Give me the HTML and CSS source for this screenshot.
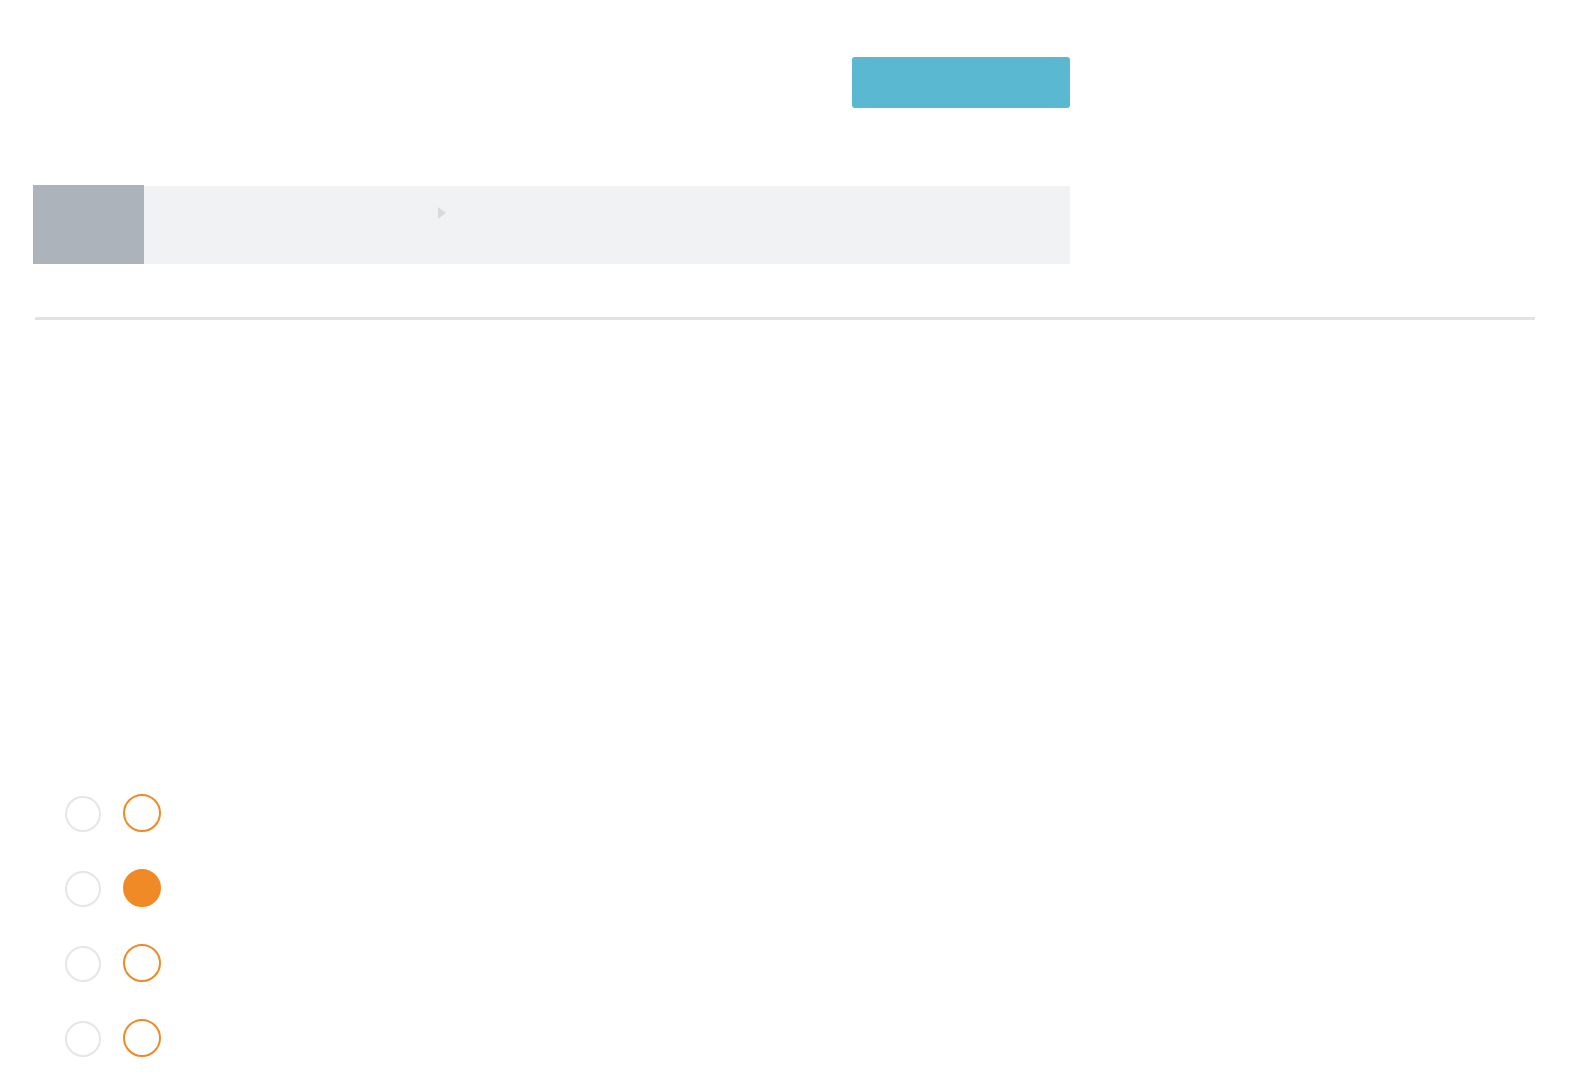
FILE: index.html
```html
<html lang="en">
<head>
    <meta charset="UTF-8">
    <meta name="viewport" content="width=device-width, initial-scale=1.0">
    <title>Options</title>
    <link rel="stylesheet" href="styles.css">
</head>
<body>
    <div class="main-column">
        <div class="toolbar">
            <button class="action-button" type="button"></button>
        </div>
        <div class="path-bar">
            <div class="path-thumb"></div>
            <div class="path-strip">
                <span class="path-arrow"></span>
            </div>
        </div>
    </div>
    <hr class="divider">
    <div class="choice-list">
        <div class="choice-row"><span class="dot"></span><span class="dot orange"></span></div>
        <div class="choice-row"><span class="dot"></span><span class="dot orange filled"></span></div>
        <div class="choice-row"><span class="dot"></span><span class="dot orange"></span></div>
        <div class="choice-row"><span class="dot"></span><span class="dot orange"></span></div>
    </div>
</body>
</html>
```

FILE: styles.css
```css
body {
    margin: 0;
    font-family: "Liberation Sans", Arial, sans-serif;
    background: #ffffff;
}
.main-column {
    width: 1037px;
    margin-left: 33px;
    padding-top: 57px;
}
.toolbar {
    display: flex;
    justify-content: flex-end;
}
.action-button {
    width: 218px;
    height: 51px;
    border: none;
    border-radius: 3px;
    background: #5ab9d1;
    padding: 0;
}
.path-bar {
    display: flex;
    height: 79px;
    margin-top: 77px;
}
.path-thumb {
    width: 111px;
    background: #acb3bb;
}
.path-strip {
    flex: 1;
    margin-top: 1px;
    background: #f1f2f4;
    padding-left: 294px;
    padding-top: 21px;
}
.path-arrow {
    display: block;
    width: 0;
    height: 0;
    border-top: 6px solid transparent;
    border-bottom: 6px solid transparent;
    border-left: 8px solid #d9dadd;
}
.divider {
    width: 1500px;
    height: 3px;
    margin: 53px 0 0 35px;
    border: none;
    background: #e3e3e3;
}
.choice-list {
    display: flex;
    flex-direction: column;
    gap: 39px;
    margin-top: 476px;
    padding-left: 65px;
}
.choice-row {
    display: flex;
    align-items: flex-start;
    gap: 22px;
    height: 36px;
}
.dot {
    box-sizing: border-box;
    width: 36px;
    height: 36px;
    border-radius: 50%;
    border: 2px solid #e6e6e6;
}
.dot.orange {
    width: 38px;
    height: 38px;
    border-color: #ef8a26;
    margin-top: -2px;
}
.dot.filled {
    background: #ef8a26;
}
```
